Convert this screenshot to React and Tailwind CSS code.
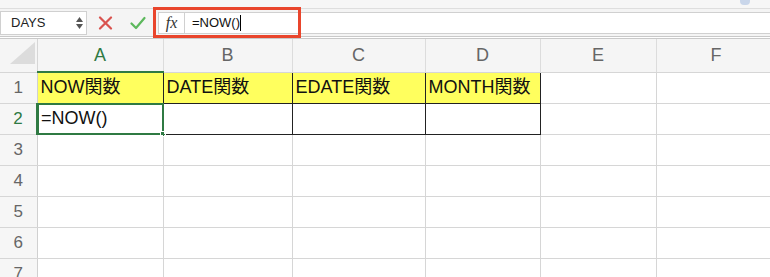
import React from 'react';

const cols = [
  { key: 'A', w: 126 },
  { key: 'B', w: 129 },
  { key: 'C', w: 133 },
  { key: 'D', w: 115 },
  { key: 'E', w: 116 },
  { key: 'F', w: 120 },
];

const data = {
  1: ['NOW関数', 'DATE関数', 'EDATE関数', 'MONTH関数'],
  2: ['=NOW()', '', '', ''],
};

const font = { fontFamily: '"Liberation Sans", "Noto Sans CJK JP", sans-serif' };

function Cell({ row, idx }) {
  const filled = data[row] && idx < 4;
  const yellow = row === 1 && idx < 4;
  const selected = row === 2 && idx === 0;
  return (
    <td
      className={
        'relative h-[31px] p-0 pl-[3px] text-[18px] text-[#111] whitespace-nowrap overflow-visible ' +
        (filled ? 'border border-[#222] ' : 'border border-[#d6d6d6] ') +
        (yellow ? 'bg-[#ffff5e]' : 'bg-white')
      }
    >
      {filled ? data[row][idx] : ''}
      {selected && (
        <div className="absolute -left-px -top-px -right-px -bottom-px border-2 border-[#2f7a43]">
          <div className="absolute -right-[4px] -bottom-[4px] w-[6px] h-[6px] bg-[#2f7a43] border border-white" />
        </div>
      )}
    </td>
  );
}

export default function App() {
  return (
    <div className="w-[770px] h-[277px] overflow-hidden bg-white relative" style={font}>
      {/* toolbar remnant */}
      <div className="h-[9px] bg-[#f6f6f6] border-b border-[#dedede] flex justify-end pr-[20px]">
        <div className="w-[10px] h-[5px] bg-[#c9d6ea] rounded-b-sm" />
      </div>

      {/* formula bar */}
      <div className="h-[28px] bg-[#f4f4f4] flex items-center border-b border-[#c9c9c9]">
        <div className="w-[87px] h-[24px] bg-white border border-[#d0d0d0] flex items-center justify-between pl-[10px] pr-[3px]">
          <span className="text-[13px] text-[#222]">DAYS</span>
          <div className="flex flex-col items-center gap-[2px]">
            <svg width="7" height="5" viewBox="0 0 7 5"><path d="M3.5 0 L7 5 L0 5 Z" fill="#555" /></svg>
            <svg width="7" height="5" viewBox="0 0 7 5"><path d="M0 0 L7 0 L3.5 5 Z" fill="#555" /></svg>
          </div>
        </div>
        <div className="w-[26px] flex justify-end">
          <svg width="15" height="14" viewBox="0 0 15 14">
            <path d="M2 1.5 L13 12.5 M13 1.5 L2 12.5" stroke="#d9534f" strokeWidth="2.2" strokeLinecap="round" />
          </svg>
        </div>
        <div className="w-[33px] flex justify-end">
          <svg width="16" height="14" viewBox="0 0 16 14">
            <path d="M1.5 7.5 L6 12 L14.5 2" stroke="#5cb85c" strokeWidth="2.2" fill="none" strokeLinecap="round" strokeLinejoin="round" />
          </svg>
        </div>
        <div className="ml-[12px] h-[22px] w-[27px] bg-white border border-[#d0d0d0] flex items-center justify-center">
          <span className="text-[16px] italic text-[#333]" style={{ fontFamily: '"Liberation Serif", serif' }}>fx</span>
        </div>
        <div className="flex-1 h-[22px] bg-white border-y border-[#d0d0d0] flex items-center pl-[7px]">
          <span className="text-[13px] text-[#111]">=NOW()</span>
          <span className="w-px h-[16px] bg-black" />
        </div>
      </div>

      {/* annotation */}
      <div className="absolute left-[153px] top-[7px] w-[148px] h-[31px] border-[3px] border-[#e9452c]" />

      <div className="h-[2px] bg-white border-b border-[#c9c9c9]" />

      <table className="table-fixed border-collapse" style={{ width: 37 + cols.reduce((s, c) => s + c.w, 0) }}>
        <colgroup>
          <col style={{ width: 37 }} />
          {cols.map((c) => (
            <col key={c.key} style={{ width: c.w }} />
          ))}
        </colgroup>
        <thead>
          <tr className="h-[33px]">
            <th className="relative p-0 bg-[#f5f5f5] border-r border-b border-[#d6d6d6]">
              <svg className="absolute left-[10px] bottom-[8px]" width="25" height="22" viewBox="0 0 25 22">
                <path d="M25 0 L25 22 L0 22 Z" fill="#dcdcdc" />
              </svg>
            </th>
            {cols.map((c) => (
              <th
                key={c.key}
                className={
                  'p-0 font-normal text-[18px] bg-[#f5f5f5] border-r border-[#dcdcdc] ' +
                  (c.key === 'A' ? 'text-[#2f7a43] border-b-2 border-b-[#2f7a43] bg-[#ececec]' : 'text-[#666] border-b border-b-[#d6d6d6]')
                }
              >
                {c.key}
              </th>
            ))}
          </tr>
        </thead>
        <tbody>
          {[1, 2, 3, 4, 5, 6, 7].map((r) => (
            <tr key={r}>
              <td
                className={
                  'h-[31px] p-0 text-center text-[17px] bg-[#f6f6f6] border-b border-[#d6d6d6] ' +
                  (r === 2 ? 'text-[#2f7a43] border-r-2 border-r-[#2f7a43]' : 'text-[#666] border-r border-r-[#d0d0d0]')
                }
              >
                {r}
              </td>
              {cols.map((c, i) => (
                <Cell key={c.key} row={r} idx={i} />
              ))}
            </tr>
          ))}
        </tbody>
      </table>
    </div>
  );
}
